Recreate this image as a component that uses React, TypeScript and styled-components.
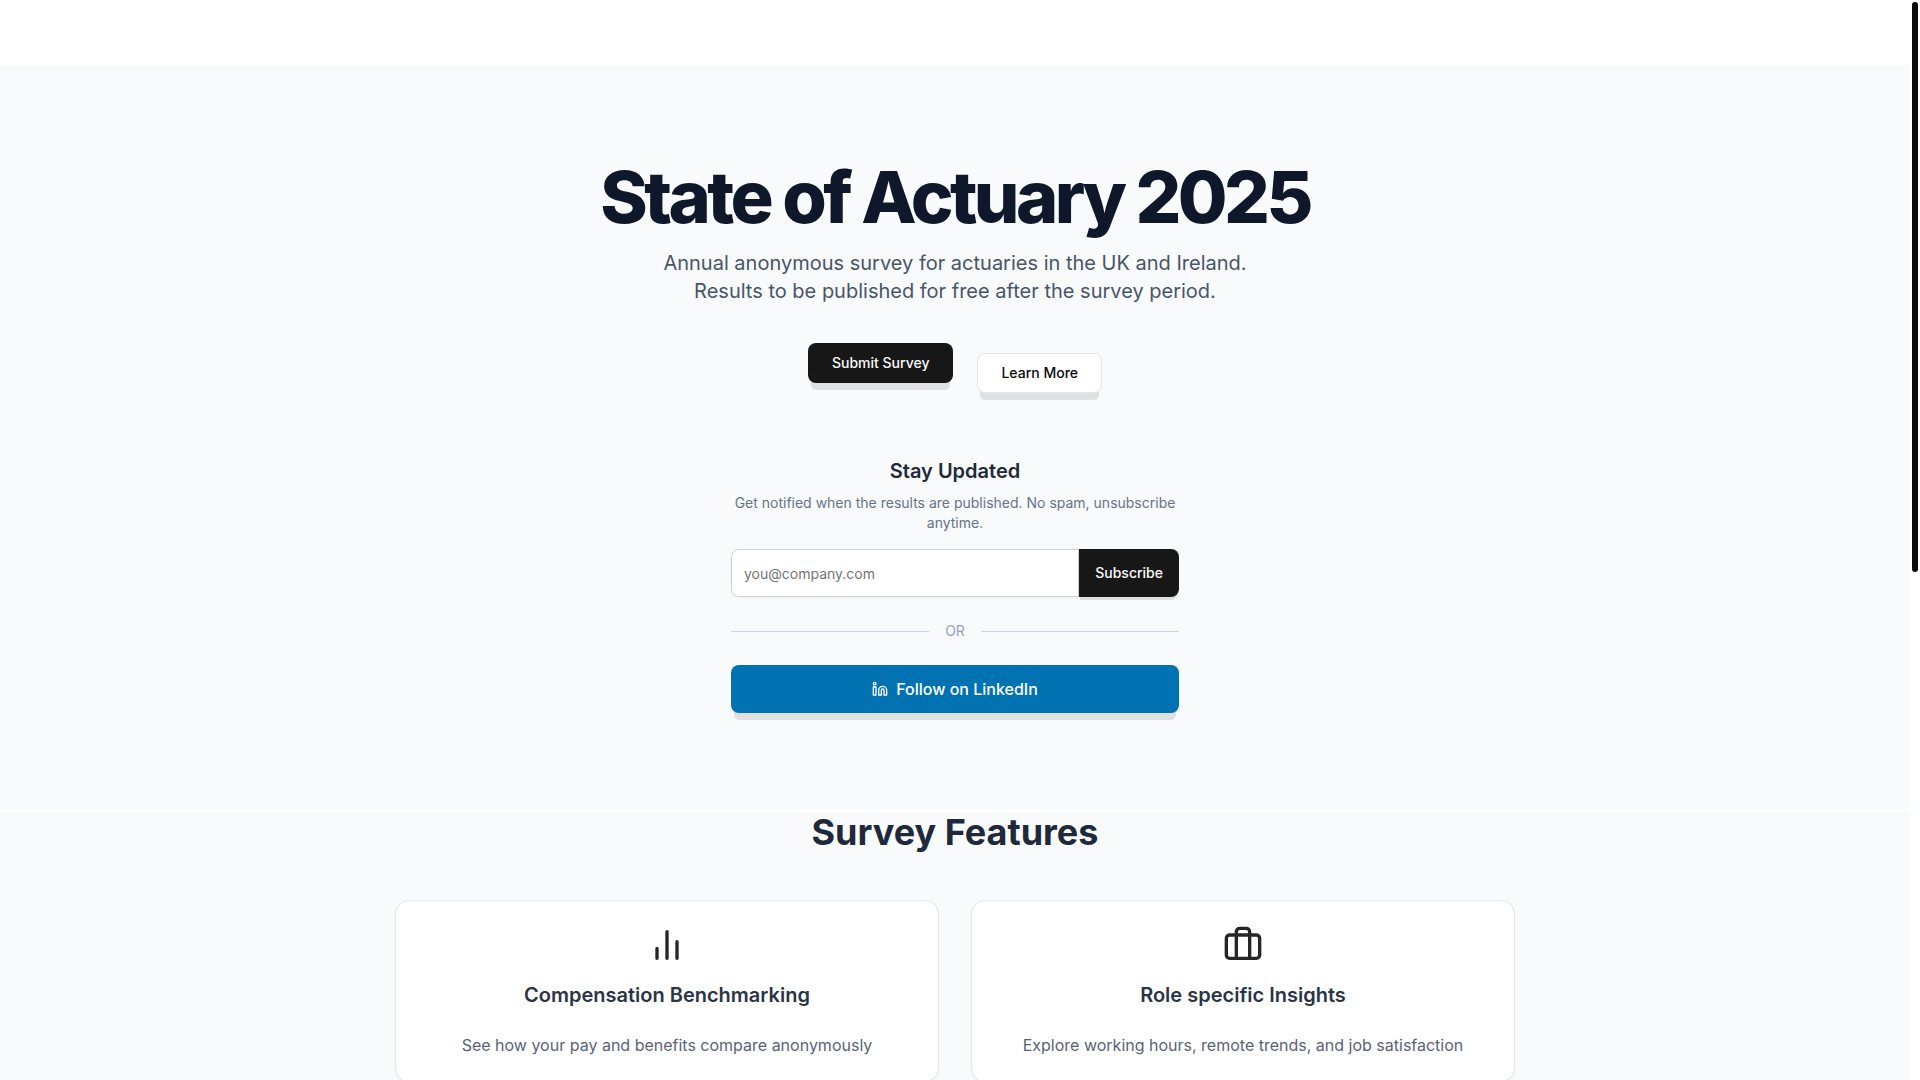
import React from "react";
import styled, { createGlobalStyle, css } from "styled-components";
import { Linkedin } from "lucide-react";

const GlobalStyle = createGlobalStyle`
  *, *::before, *::after { box-sizing: border-box; }
  body {
    margin: 0;
    background: #ffffff;
    color: #0f172a;
    font-family: Inter, "Liberation Sans", sans-serif;
    font-size: 16px;
    line-height: 24px;
    -webkit-font-smoothing: antialiased;
  }
  h1, h2, h3, p { margin: 0; }
  button, input { font: inherit; }
`;

const Shell = styled.div`
  display: flex;
  height: 100vh;
  overflow: hidden;
`;

const Scroller = styled.div`
  flex: 1;
  min-width: 0;
  overflow-y: auto;
  scrollbar-width: none;
`;

const ScrollRail = styled.div`
  width: 10px;
  padding: 2px;
  background: #ffffff;
`;

const ScrollThumb = styled.div`
  height: 53%;
  border-radius: 3px;
  background: #0a0a0a;
`;

const Header = styled.header`
  height: 65px;
  background: #ffffff;
`;

const Hero = styled.section`
  display: flex;
  flex-direction: column;
  align-items: center;
  padding: 96px 24px;
  background: #f9fafc;
  text-align: center;
`;

const HeroTitle = styled.h1`
  font-size: 72px;
  line-height: 72px;
  font-weight: 800;
  letter-spacing: -0.05em;
`;

const HeroText = styled.p`
  max-width: 672px;
  margin-top: 16px;
  color: #475569;
  font-size: 20px;
  line-height: 28px;
`;

const Actions = styled.div`
  display: flex;
  gap: 24px;
  height: 50px;
  margin-top: 38px;
`;

const ActionLink = styled.a<{ $primary?: boolean }>`
  display: flex;
  align-items: center;
  height: 40px;
  border-radius: 8px;
  box-shadow: 0 10px 0 -3px rgba(0, 0, 0, 0.1);
  font-size: 14px;
  line-height: 20px;
  font-weight: 500;
  text-decoration: none;
  ${({ $primary }) =>
    $primary
      ? css`
          align-self: flex-start;
          padding: 0 24px;
          background: #171717;
          color: #fafafa;
        `
      : css`
          align-self: flex-end;
          padding: 0 23px;
          border: 1px solid #e5e5e5;
          background: #ffffff;
          color: #0a0a0a;
        `}
`;

const Signup = styled.div`
  display: flex;
  flex-direction: column;
  width: 100%;
  max-width: 448px;
  margin-top: 64px;
`;

const SignupTitle = styled.h2`
  color: #1e293b;
  font-size: 20px;
  line-height: 28px;
  font-weight: 600;
`;

const SignupText = styled.p`
  margin-top: 8px;
  color: #64748b;
  font-size: 14px;
  line-height: 20px;
`;

const Form = styled.form`
  display: flex;
  height: 48px;
  margin-top: 16px;
`;

const EmailInput = styled.input`
  flex: 1;
  min-width: 0;
  padding: 2px 12px 0;
  border: 1px solid #cbd5e1;
  border-radius: 8px 0 0 8px;
  outline: none;
  background: #ffffff;
  box-shadow: 0 1px 2px rgba(0, 0, 0, 0.05);
  color: #0f172a;
  font-size: 14px;
  line-height: 20px;
  &::placeholder { color: #757575; }
`;

const SubscribeButton = styled.button`
  padding: 0 16px;
  border: 0;
  border-radius: 0 8px 8px 0;
  background: #171717;
  box-shadow: 0 4px 0 -1px rgba(0, 0, 0, 0.1);
  color: #fafafa;
  font-size: 14px;
  line-height: 20px;
  font-weight: 500;
`;

const Divider = styled.div`
  display: flex;
  align-items: center;
  gap: 16px;
  margin: 24px 0;
  color: #94a3b8;
  font-size: 14px;
  line-height: 20px;
  &::before, &::after {
    content: "";
    flex: 1;
    height: 1px;
    background: #cbd5e1;
  }
`;

const LinkedInLink = styled.a`
  display: flex;
  align-items: center;
  justify-content: center;
  gap: 8px;
  height: 48px;
  border-radius: 8px;
  background: #0072b1;
  box-shadow: 0 10px 0 -3px rgba(0, 0, 0, 0.1);
  color: #ffffff;
  font-weight: 500;
  text-decoration: none;
`;

const Features = styled.section`
  margin-top: 3px;
  padding: 0 24px 96px;
  background: #f9fafc;
  text-align: center;
`;

const FeaturesTitle = styled.h2`
  color: #1e293b;
  font-size: 36px;
  line-height: 40px;
  font-weight: 700;
`;

const CardGrid = styled.div`
  display: grid;
  grid-template-columns: 1fr 1fr;
  gap: 32px;
  max-width: 1120px;
  margin: 48px auto 0;
`;

const Card = styled.article`
  display: flex;
  flex-direction: column;
  align-items: center;
  padding: 24px;
  border: 1px solid #e5e7eb;
  border-radius: 14px;
  background: #ffffff;
  box-shadow: 0 1px 2px rgba(0, 0, 0, 0.05);
`;

const CardIcon = styled.svg`
  width: 40px;
  height: 40px;
  fill: none;
  stroke: #262626;
  stroke-width: 2;
  stroke-linecap: round;
  stroke-linejoin: round;
`;

const CardTitle = styled.h3`
  margin-top: 16px;
  color: #2a3446;
  font-size: 20px;
  line-height: 28px;
  font-weight: 600;
`;

const CardText = styled.p`
  margin-top: 24px;
  color: #586476;
`;

const features = [
  {
    title: "Compensation Benchmarking",
    text: "See how your pay and benefits compare anonymously",
    icon: <path d="M18 20V10M12 20V4M6 20v-6" />,
  },
  {
    title: "Role specific Insights",
    text: "Explore working hours, remote trends, and job satisfaction",
    icon: (
      <>
        <rect x="2" y="6" width="20" height="14" rx="2" />
        <path d="M16 20V4a2 2 0 0 0-2-2h-4a2 2 0 0 0-2 2v16" />
      </>
    ),
  },
];

export default function App() {
  return (
    <>
      <GlobalStyle />
      <Shell>
        <Scroller>
          <Header />
          <main>
            <Hero>
              <HeroTitle>State of Actuary 2025</HeroTitle>
              <HeroText>
                Annual anonymous survey for actuaries in the UK and Ireland.
                <br />
                Results to be published for free after the survey period.
              </HeroText>
              <Actions>
                <ActionLink $primary href="#survey">Submit Survey</ActionLink>
                <ActionLink href="#features">Learn More</ActionLink>
              </Actions>
              <Signup>
                <SignupTitle>Stay Updated</SignupTitle>
                <SignupText>
                  Get notified when the results are published. No spam, unsubscribe anytime.
                </SignupText>
                <Form onSubmit={(event) => event.preventDefault()}>
                  <EmailInput type="email" aria-label="Email address" placeholder="you@company.com" />
                  <SubscribeButton type="submit">Subscribe</SubscribeButton>
                </Form>
                <Divider>OR</Divider>
                <LinkedInLink href="#linkedin">
                  <Linkedin size={16} aria-hidden="true" />
                  Follow on LinkedIn
                </LinkedInLink>
              </Signup>
            </Hero>
            <Features id="features">
              <FeaturesTitle>Survey Features</FeaturesTitle>
              <CardGrid>
                {features.map((feature) => (
                  <Card key={feature.title}>
                    <CardIcon viewBox="0 0 24 24" aria-hidden="true">{feature.icon}</CardIcon>
                    <CardTitle>{feature.title}</CardTitle>
                    <CardText>{feature.text}</CardText>
                  </Card>
                ))}
              </CardGrid>
            </Features>
          </main>
        </Scroller>
        <ScrollRail aria-hidden="true">
          <ScrollThumb />
        </ScrollRail>
      </Shell>
    </>
  );
}
